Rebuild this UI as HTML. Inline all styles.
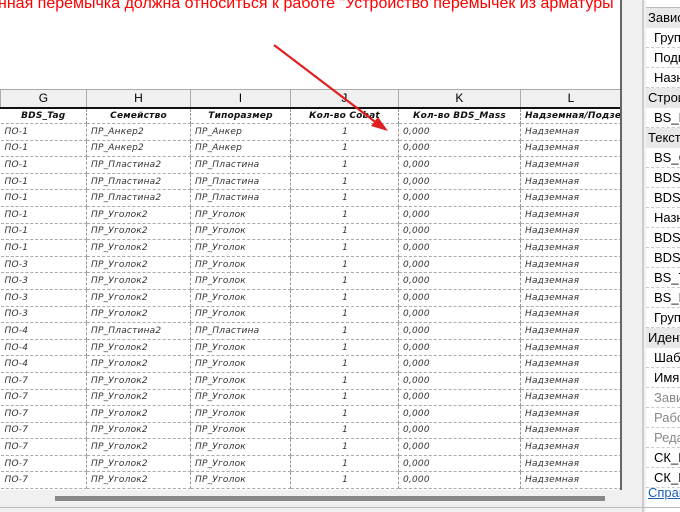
<!DOCTYPE html>
<html><head><meta charset="utf-8"><style>
*{margin:0;padding:0;box-sizing:border-box}
body{width:680px;height:512px;overflow:hidden;background:#fff;position:relative;font-family:"Liberation Sans","DejaVu Sans",sans-serif}
.red{position:absolute;top:-5px;left:-2px;color:#f00;font-size:16px;white-space:nowrap}
table{position:absolute;left:0;top:89px;border-collapse:collapse;table-layout:fixed;width:621px}
td{height:16.6px;border-right:1px dashed #999;border-bottom:1px dashed #aaa;font-size:9px;font-style:italic;color:#333;padding:0 4px;white-space:nowrap;overflow:hidden;font-family:"DejaVu Sans",sans-serif;letter-spacing:.2px}
tr.h td{background:#f0f0f0;font-style:normal;font-size:12px;text-align:center;color:#000;border:1px solid #aaa;border-bottom:2px solid #111;height:18px;font-family:"Liberation Sans",sans-serif}
tr.n td{font-weight:bold;text-align:center;color:#111;height:16px}
td.r{text-align:right;padding-right:50px}
.clip{position:absolute;left:0;top:0;width:621px;height:490px;overflow:hidden}
.vline{position:absolute;left:620px;top:0;width:2px;height:490px;background:#666}
.gap{position:absolute;left:622px;top:0;width:24px;height:512px;background:#f0f0f0}
.gap2{position:absolute;left:642px;top:0;width:2px;height:512px;background:#ccc}
.bot{position:absolute;left:0;top:490px;width:622px;height:22px;background:#f0f0f0}
.thumb{position:absolute;left:55px;top:496px;width:550px;height:5px;background:#888}
.bl{position:absolute;left:0;top:507px;width:680px;height:1px;background:#bbb}
.panel{position:absolute;left:646px;top:0;width:34px;height:490px;background:#fff;font-size:13px;color:#000}
.panel div{height:20px;line-height:20px;border-bottom:1px dashed #ccc;white-space:nowrap;overflow:hidden;padding-left:8px}
.panel div.g{background:#e8e8e8;padding-left:2px;border-bottom:none}
.panel div.d{color:#888}
.link{position:absolute;left:648px;top:485px;font-size:13px;color:#1a5fb4;text-decoration:underline;white-space:nowrap}
</style></head><body>
<div class="red">нная перемычка должна относиться к работе "Устройство перемычек из арматуры</div>
<div class="clip">
<table>
<colgroup><col style="width:86px"><col style="width:104px"><col style="width:100px"><col style="width:108px"><col style="width:122px"><col style="width:101px"></colgroup>
<tr class="h"><td>G</td><td>H</td><td>I</td><td>J</td><td>K</td><td>L</td></tr>
<tr class="n"><td>BDS_Tag</td><td>Семейство</td><td>Типоразмер</td><td>Кол-во Cobat</td><td>Кол-во BDS_Mass</td><td>Надземная/Подзе</td></tr>
<tr><td>ПО-1</td><td>ПР_Анкер2</td><td>ПР_Анкер</td><td class="r">1</td><td>0,000</td><td>Надземная</td></tr>
<tr><td>ПО-1</td><td>ПР_Анкер2</td><td>ПР_Анкер</td><td class="r">1</td><td>0,000</td><td>Надземная</td></tr>
<tr><td>ПО-1</td><td>ПР_Пластина2</td><td>ПР_Пластина</td><td class="r">1</td><td>0,000</td><td>Надземная</td></tr>
<tr><td>ПО-1</td><td>ПР_Пластина2</td><td>ПР_Пластина</td><td class="r">1</td><td>0,000</td><td>Надземная</td></tr>
<tr><td>ПО-1</td><td>ПР_Пластина2</td><td>ПР_Пластина</td><td class="r">1</td><td>0,000</td><td>Надземная</td></tr>
<tr><td>ПО-1</td><td>ПР_Уголок2</td><td>ПР_Уголок</td><td class="r">1</td><td>0,000</td><td>Надземная</td></tr>
<tr><td>ПО-1</td><td>ПР_Уголок2</td><td>ПР_Уголок</td><td class="r">1</td><td>0,000</td><td>Надземная</td></tr>
<tr><td>ПО-1</td><td>ПР_Уголок2</td><td>ПР_Уголок</td><td class="r">1</td><td>0,000</td><td>Надземная</td></tr>
<tr><td>ПО-3</td><td>ПР_Уголок2</td><td>ПР_Уголок</td><td class="r">1</td><td>0,000</td><td>Надземная</td></tr>
<tr><td>ПО-3</td><td>ПР_Уголок2</td><td>ПР_Уголок</td><td class="r">1</td><td>0,000</td><td>Надземная</td></tr>
<tr><td>ПО-3</td><td>ПР_Уголок2</td><td>ПР_Уголок</td><td class="r">1</td><td>0,000</td><td>Надземная</td></tr>
<tr><td>ПО-3</td><td>ПР_Уголок2</td><td>ПР_Уголок</td><td class="r">1</td><td>0,000</td><td>Надземная</td></tr>
<tr><td>ПО-4</td><td>ПР_Пластина2</td><td>ПР_Пластина</td><td class="r">1</td><td>0,000</td><td>Надземная</td></tr>
<tr><td>ПО-4</td><td>ПР_Уголок2</td><td>ПР_Уголок</td><td class="r">1</td><td>0,000</td><td>Надземная</td></tr>
<tr><td>ПО-4</td><td>ПР_Уголок2</td><td>ПР_Уголок</td><td class="r">1</td><td>0,000</td><td>Надземная</td></tr>
<tr><td>ПО-7</td><td>ПР_Уголок2</td><td>ПР_Уголок</td><td class="r">1</td><td>0,000</td><td>Надземная</td></tr>
<tr><td>ПО-7</td><td>ПР_Уголок2</td><td>ПР_Уголок</td><td class="r">1</td><td>0,000</td><td>Надземная</td></tr>
<tr><td>ПО-7</td><td>ПР_Уголок2</td><td>ПР_Уголок</td><td class="r">1</td><td>0,000</td><td>Надземная</td></tr>
<tr><td>ПО-7</td><td>ПР_Уголок2</td><td>ПР_Уголок</td><td class="r">1</td><td>0,000</td><td>Надземная</td></tr>
<tr><td>ПО-7</td><td>ПР_Уголок2</td><td>ПР_Уголок</td><td class="r">1</td><td>0,000</td><td>Надземная</td></tr>
<tr><td>ПО-7</td><td>ПР_Уголок2</td><td>ПР_Уголок</td><td class="r">1</td><td>0,000</td><td>Надземная</td></tr>
<tr><td>ПО-7</td><td>ПР_Уголок2</td><td>ПР_Уголок</td><td class="r">1</td><td>0,000</td><td>Надземная</td></tr>
</table>
</div>
<svg style="position:absolute;left:0;top:0" width="620" height="200"><line x1="274" y1="45" x2="378" y2="124" stroke="#e02020" stroke-width="2.2"/><polygon points="388,131 371,126 378,117" fill="#e02020"/></svg>
<div class="vline"></div>
<div class="bot"></div><div class="thumb"></div>
<div class="gap"></div><div class="gap2"></div>
<div class="panel">
<div style="height:8px;border-bottom:1px solid #bbb;padding:0"></div>
<div class="g">Зависимости</div><div>Группа</div><div>Подпись</div><div>Назначение</div>
<div class="g">Строительство</div><div>BS_Блок</div>
<div class="g">Текст</div><div>BS_C</div><div>BDS_</div><div>BDS_</div><div>Назн</div><div>BDS_</div><div>BDS_</div><div>BS_T</div><div>BS_П</div><div>Группа</div>
<div class="g">Идентификация</div><div>Шаблон</div><div>Имя</div><div class="d">Зависит</div><div class="d">Рабочий</div><div class="d">Редакт</div><div>СК_К</div><div>СК_П</div>
</div>
<div class="link">Справка</div>
<div class="bl"></div>
</body></html>
